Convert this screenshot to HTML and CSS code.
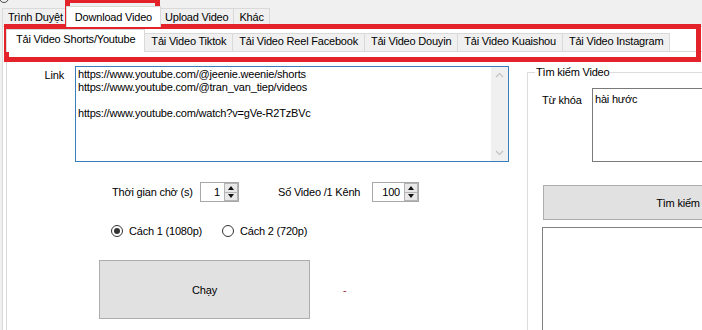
FILE: index.html
```html
<!DOCTYPE html>
<html lang="vi">
<head>
    <meta charset="UTF-8">
    <meta name="viewport" content="width=device-width, initial-scale=1.0">
    <title>Download Video</title>
    <link rel="stylesheet" href="styles.css">
</head>
<body>
    <div class="window">
        <span class="corner"></span>
        <div class="tabs outer-tabs">
            <div class="tab">Trình Duyệt</div>
            <div class="tab active">Download Video</div>
            <div class="tab">Upload Video</div>
            <div class="tab">Khác</div>
        </div>
        <div class="outer-page">
            <div class="tabs inner-tabs">
                <div class="tab active">Tải Video Shorts/Youtube</div>
                <div class="tab">Tải Video Tiktok</div>
                <div class="tab">Tải Video Reel Facebook</div>
                <div class="tab">Tải Video Douyin</div>
                <div class="tab">Tải Video Kuaishou</div>
                <div class="tab">Tải Video Instagram</div>
            </div>
            <div class="inner-page">
                <div class="left">
                    <div class="link-row">
                        <div class="link-label">Link</div>
                        <div class="textbox links">
                            <div class="lines">
                                <div>https://www.youtube.com/@jeenie.weenie/shorts</div>
                                <div>https://www.youtube.com/@tran_van_tiep/videos</div>
                                <div>&nbsp;</div>
                                <div>https://www.youtube.com/watch?v=gVe-R2TzBVc</div>
                            </div>
                            <div class="vscroll">
                                <svg width="17" height="17" viewBox="0 0 17 17"><polyline points="5,10 8.5,6.5 12,10" fill="none" stroke="#c2c2c2" stroke-width="1.2"/></svg>
                                <svg width="17" height="17" viewBox="0 0 17 17"><polyline points="5,7 8.5,10.5 12,7" fill="none" stroke="#c2c2c2" stroke-width="1.2"/></svg>
                            </div>
                        </div>
                    </div>
                    <div class="options">
                        <div class="opt-label wait">Thời gian chờ (s)</div>
                        <div class="numeric">
                            <span class="value">1</span>
                            <div class="spin"><i class="up"></i><i class="down"></i></div>
                        </div>
                        <div class="opt-label count">Số Video /1 Kênh</div>
                        <div class="numeric wide">
                            <span class="value">100</span>
                            <div class="spin"><i class="up"></i><i class="down"></i></div>
                        </div>
                    </div>
                    <div class="radios">
                        <div class="radio checked first"><span class="circle"></span>Cách 1 (1080p)</div>
                        <div class="radio"><span class="circle"></span>Cách 2 (720p)</div>
                    </div>
                    <div class="run-row">
                        <button class="btn run">Chạy</button>
                        <span class="status">-</span>
                    </div>
                </div>
                <fieldset class="search">
                    <legend>Tìm kiếm Video</legend>
                    <div class="kw-row">
                        <div class="kw-label">Từ khóa</div>
                        <div class="textbox kw">hài hước</div>
                    </div>
                    <button class="btn search-btn">Tìm kiếm</button>
                    <div class="results"></div>
                </fieldset>
            </div>
        </div>
        <div class="mark mark-main"></div>
        <div class="mark mark-sub"></div>
    </div>
</body>
</html>
```

FILE: styles.css
```css
* {
    box-sizing: border-box;
}
body {
    margin: 0;
    width: 702px;
    height: 330px;
    overflow: hidden;
    background-color: #f0f0f0;
    font-family: "Liberation Sans", Arial, sans-serif;
    font-size: 11px;
    letter-spacing: -0.2px;
    color: #000;
}
.window {
    position: relative;
    height: 330px;
    overflow: hidden;
}
.corner {
    position: absolute;
    left: -1px;
    top: -7px;
    width: 10px;
    height: 10px;
    border: 1.5px solid #4a4a4a;
    border-radius: 50%;
}
.tabs {
    display: flex;
    align-items: flex-end;
}
.tab {
    height: 18px;
    line-height: 16px;
    padding: 0 6px;
    border: 1px solid #d9d9d9;
    border-bottom: none;
    background-color: #f0f0f0;
    margin-right: -1px;
    white-space: nowrap;
}
.tab.active {
    position: relative;
    z-index: 1;
    background-color: #fff;
    margin-bottom: -1px;
}
.outer-tabs {
    height: 26px;
    padding-left: 2px;
}
.outer-tabs .tab {
    padding: 0 5px;
}
.outer-tabs .tab.active {
    height: 21px;
    padding: 2px 8px 0;
    margin-left: -2px;
    margin-right: -2px;
}
.outer-page {
    width: 700px;
    height: 304px;
    margin-left: 2px;
    padding: 0 0 0 3px;
    background-color: #fff;
    border-top: 1px solid #d9d9d9;
    border-left: 1px solid #d9d9d9;
}
.inner-tabs {
    height: 24px;
}
.inner-tabs .tab {
    line-height: 15px;
}
.inner-tabs .tab.active {
    height: 23px;
    line-height: 19px;
    padding: 0 9px;
}
.inner-page {
    display: flex;
    height: 279px;
    overflow: hidden;
    border-top: 1px solid #d9d9d9;
    border-left: 1px solid #d9d9d9;
}
.left {
    flex: 0 0 520px;
}
.link-row {
    display: flex;
    margin-top: 14px;
}
.link-label {
    width: 57px;
    padding-top: 3px;
    text-align: right;
}
.textbox {
    background-color: #fff;
    border: 1px solid #7a7a7a;
}
.links {
    display: flex;
    width: 434px;
    height: 96px;
    margin-left: 11px;
    border-color: #3a7dbb;
}
.lines {
    flex: 1;
    padding: 1px 2px;
    line-height: 13px;
}
.vscroll {
    display: flex;
    flex-direction: column;
    justify-content: space-between;
    width: 17px;
    background-color: #f0f0f0;
}
.vscroll svg {
    display: block;
}
.options {
    display: flex;
    align-items: center;
    height: 20px;
    margin-top: 20px;
    padding-left: 105px;
}
.opt-label.wait {
    width: 88px;
}
.opt-label.count {
    width: 94px;
    margin-left: 39px;
}
.numeric {
    display: flex;
    align-items: center;
    justify-content: flex-end;
    width: 39px;
    height: 20px;
    border: 1px solid #a8a8a8;
}
.numeric.wide {
    width: 47px;
}
.numeric .value {
    padding-right: 4px;
}
.spin {
    display: flex;
    flex-direction: column;
    width: 14px;
    height: 18px;
}
.spin i {
    flex: 1;
    display: flex;
    align-items: center;
    justify-content: center;
    background-color: #e8e8e8;
    border: 1px solid #b4b4b4;
}
.spin i + i {
    border-top: none;
}
.spin i::after {
    content: "";
    border-left: 3px solid transparent;
    border-right: 3px solid transparent;
}
.spin .up::after {
    border-bottom: 4px solid #111;
}
.spin .down::after {
    border-top: 4px solid #111;
}
.radios {
    display: flex;
    align-items: center;
    height: 14px;
    margin-top: 22px;
    padding-left: 104px;
}
.radio {
    display: flex;
    align-items: center;
    gap: 6px;
}
.radio.first {
    width: 111px;
}
.circle {
    width: 12px;
    height: 12px;
    border: 1px solid #333;
    border-radius: 50%;
    display: flex;
    align-items: center;
    justify-content: center;
}
.radio.checked .circle::after {
    content: "";
    width: 6px;
    height: 6px;
    border-radius: 50%;
    background-color: #333;
}
.run-row {
    display: flex;
    align-items: center;
    margin-top: 22px;
    padding-left: 92px;
}
.btn {
    font: inherit;
    letter-spacing: inherit;
    color: #000;
    background-color: #e1e1e1;
    border: 1px solid #adadad;
    padding: 0;
}
.run {
    width: 211px;
    height: 59px;
}
.status {
    margin-left: 33px;
    color: #a0282e;
}
.search {
    flex: 1;
    min-width: 0;
    height: 279px;
    margin: 14px 0 0;
    padding: 0 0 0 14px;
    overflow: hidden;
    border: 1px solid #dcdcdc;
    border-right: none;
    border-bottom: none;
}
.search legend {
    margin-left: -7px;
    padding: 0 1px;
    line-height: 13px;
}
.kw-row {
    display: flex;
    margin-top: 9px;
}
.kw-label {
    flex: none;
    width: 50px;
    padding-top: 6px;
}
.kw {
    flex: none;
    width: 150px;
    height: 74px;
    padding: 4px 2px;
}
.search-btn {
    display: block;
    width: 270px;
    height: 35px;
    margin: 23px 0 0 1px;
}
.results {
    width: 200px;
    height: 120px;
    margin-top: 7px;
    background-color: #fff;
    border: 1px solid #828282;
}
.mark {
    position: absolute;
    border: 5px solid #e3222a;
}
.mark-main {
    left: 65px;
    top: -2px;
    width: 95px;
    height: 31px;
}
.mark-sub {
    left: 4px;
    top: 24px;
    width: 697px;
    height: 38px;
}
```
